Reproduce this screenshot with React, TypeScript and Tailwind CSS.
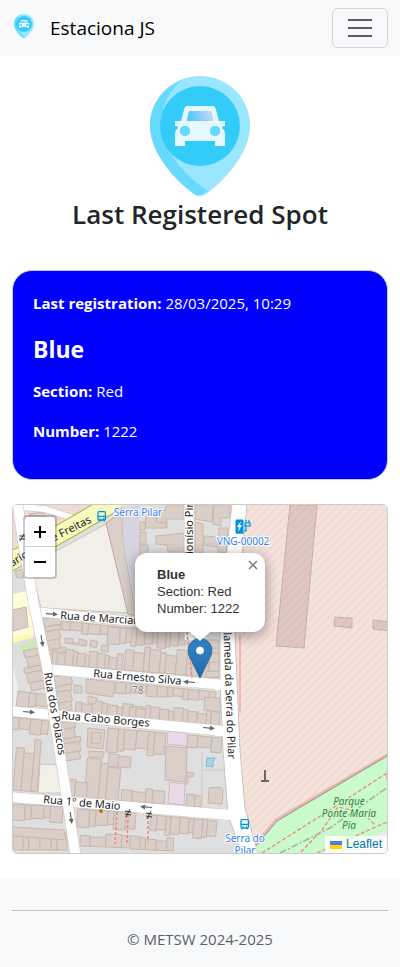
import { useState } from "react";

type Point = [number, number];

const pts = (list: Point[]) => list.map((p) => p.join(",")).join(" ");

// A terrace of houses along a line; depth runs perpendicular (negative = upwards).
function Terrace({ from, to, depth, count, seed = 1 }: { from: Point; to: Point; depth: number; count: number; seed?: number }) {
  const dx = to[0] - from[0];
  const dy = to[1] - from[1];
  const len = Math.hypot(dx, dy);
  const nx = -dy / len;
  const ny = dx / len;
  const cut = (i: number) => (i === 0 || i === count ? i / count : (i + (((i * 7 + seed * 3) % 5) - 2) * 0.12) / count);
  return (
    <>
      {Array.from({ length: count }, (_, i) => {
        const d = depth * (1 - ((i * 5 + seed * 2) % 4) * 0.09);
        const a: Point = [from[0] + dx * cut(i), from[1] + dy * cut(i)];
        const b: Point = [from[0] + dx * cut(i + 1), from[1] + dy * cut(i + 1)];
        return <polygon key={i} points={pts([a, b, [b[0] + nx * d, b[1] + ny * d], [a[0] + nx * d, a[1] + ny * d]])} />;
      })}
    </>
  );
}

function Street({ d, width }: { d: string; width: number }) {
  return (
    <g fill="none" strokeLinejoin="round">
      <path d={d} stroke="#c8c4c0" strokeWidth={width + 1} />
      <path d={d} stroke="#fff" strokeWidth={width} />
    </g>
  );
}

function Arrow({ x, y, angle }: { x: number; y: number; angle: number }) {
  return (
    <g transform={`translate(${x} ${y}) rotate(${angle})`} fill="#666">
      <path d="M-6 -.6H1V-2.5L6 0L1 2.5V.6H-6Z" />
    </g>
  );
}

function BusStop({ x, y }: { x: number; y: number }) {
  return (
    <g transform={`translate(${x} ${y})`} fill="none" stroke="#0092da" strokeWidth="1.3">
      <rect x="1" y=".7" width="7.4" height="8.3" rx="1" />
      <path d="M1 5.4H8.4M2.2 9V10.6M7.2 9V10.6M2.5 7.3H3.5M6 7.3H7" />
    </g>
  );
}

function PinLogo({ className, id }: { className: string; id: string }) {
  const pin = "M50 0C22 0 0 22 0 50C0 78 28 107 45 118.500Q50 121.500 55 118.500C72 107 100 78 100 50C100 22 78 0 50 0Z";
  return (
    <svg viewBox="0 0 100 120" className={className} aria-hidden="true">
      <defs>
        <linearGradient id={id} x1="0" y1="0.3" x2="1" y2="0.1">
          <stop offset="0.05" stopColor="#58c8f7" />
          <stop offset="1" stopColor="#d6d6f3" />
        </linearGradient>
      </defs>
      <path d={pin} fill="#9ae6fe" />
      <path d="M33 4C12 12 0 29 0 50C0 78 28 107 45 118.500Q50 121.500 58 114.500C40 104 22 84 15 66C8 42 13 18 33 4Z" fill="#67d9fd" />
      <circle cx="50" cy="50" r="40" fill="#33ccf9" />
      <path
        fill="#e6f8ff"
        fillRule="evenodd"
        d="M37 30H63Q65 30 65.500 32L69 45H75V50H73L72 52Q75 54 75 57V70H65V65H35V70H25V57Q25 54 28 52L27 50H25V45H31L34.500 32Q35 30 37 30ZM39 35L37 45H63L61 35ZM35 50A5 5 0 1 0 35 60A5 5 0 1 0 35 50ZM65 50A5 5 0 1 0 65 60A5 5 0 1 0 65 50Z"
      />
      <path d="M39 35H61L63 45H37Z" fill={`url(#${id})`} />
      <circle cx="35" cy="55" r="5" fill="#67d9fd" />
      <circle cx="65" cy="55" r="5" fill="#67d9fd" />
    </svg>
  );
}

function MapTiles() {
  return (
    <svg viewBox="13 505 374 348" preserveAspectRatio="xMidYMid slice" className="block h-full w-full font-['Noto_Sans',sans-serif]" aria-label="Street map">
      <defs>
        <pattern id="hatch" width="6" height="6" patternUnits="userSpaceOnUse" patternTransform="rotate(45)">
          <path d="M3 0V6" stroke="#f3c9c6" strokeWidth="1" opacity="0.75" />
        </pattern>
      </defs>
      <rect x="13" y="505" width="374" height="348" fill="#dfdfdf" />

      {/* land use */}
      <polygon points="13,505 90,505 60,525 13,550" fill="#f1dad4" />
      <polygon points="30,565 58,550 106,524 130,613 41,608" fill="#f2efe9" stroke="#cfc4bb" />
      <polygon points="106,523 122,512 123,540 136,616 128,614" fill="#d9cfc8" stroke="#c0ad9e" />
      <polygon points="122,512 138,505 143,560 150,616 136,616 123,540" fill="#d6d5df" />
      <polygon points="13,594 27,591 34,634 13,638" fill="#fffcd9" />
      <polygon points="13,638 33,633 34,637 13,643" fill="#fff9b0" />
      <polygon points="20,646 35,641 37,648 20,652" fill="#cdebb0" />
      <polygon points="13,665 22,706 13,706" fill="#f2efe9" />
      <polygon points="40,764 58,765 62,793 38,793" fill="#f2efe9" stroke="#cfc4bb" />

      <g fill="#d9cfc8" stroke="#c8b8ab" strokeWidth="1">
        {/* north */}
        <polygon points="13,610 26,607 28,627 13,631" />
        <polygon points="29,514 43,512 46,519 33,522" />
        <polygon points="15,571 25,569 27,577 17,578" />
        <polygon points="166,505 184,505 184,519 167,519 167,528 156,524 156,510 166,510" />
        <polygon points="146,516 156,515 156,522 166,523 166,528 145,528" />
        <polygon points="156,536 184,533 184,552 168,552 167,545 156,544" />
        <polygon points="140,522 145,522 145,530 140,530" />
        <polygon points="140,532 146,532 146,544 140,544" />
        <polygon points="140,545 148,545 148,556 140,556" />
        <polygon points="195,505 213,505 212,522 195,519" />
        <polygon points="214,505 230,505 229,518 221,518 221,526 213,524" />
        <polygon points="204,536 218,537 217,547 204,545" />
        <polygon points="195,522 203,524 203,553 195,553" />
        <polygon points="219,528 228,528 226,553 218,552" />

        {/* Marciano to Ernesto Silva */}
        <Terrace from={[43, 619]} to={[51, 663]} depth={-17} count={6} seed={2} />
        <Terrace from={[62, 621]} to={[130, 628]} depth={11} count={7} seed={3} />
        <Terrace from={[52, 664]} to={[122, 670]} depth={-16} count={11} seed={1} />
        <Terrace from={[108, 627]} to={[138, 629]} depth={17} count={3} seed={4} />
        <Terrace from={[124, 670]} to={[218, 678]} depth={-25} count={11} seed={5} />
        <Terrace from={[132, 628]} to={[186, 632]} depth={18} count={8} seed={6} />
        <polygon points="65,638 73,639 73,643 79,643 79,639 87,641 86,646 65,643" />
        <polygon points="102,645 109,646 108,652 101,651" />
        <polygon points="91,640 98,642 96,648 90,646" />
        <Terrace from={[219, 640]} to={[219, 677]} depth={13} count={5} seed={2} />

        {/* Ernesto Silva to Cabo Borges */}
        <Terrace from={[54, 677]} to={[60, 712]} depth={-17} count={4} seed={2} />
        <polygon points="74,685 82,686 82,693 74,693" />
        <polygon points="86,679 115,682 113,697 86,693" />
        <Terrace from={[116, 682]} to={[216, 692]} depth={11} count={12} seed={4} />
        <Terrace from={[75, 714]} to={[148, 721]} depth={-15} count={9} seed={1} />
        <Terrace from={[129, 719]} to={[219, 726]} depth={-15} count={12} seed={3} />
        <polygon points="88,696 97,698 95,704 88,703" />
        <polygon points="205,697 220,698 220,712 204,710" />

        {/* west of Rua dos Polacos */}
        <Terrace from={[38, 648]} to={[46, 688]} depth={18} count={5} seed={3} />
        <Terrace from={[18, 691]} to={[50, 695]} depth={15} count={3} seed={2} />
        <Terrace from={[13, 717]} to={[49, 721]} depth={15} count={4} seed={1} />
        <Terrace from={[13, 790]} to={[37, 792]} depth={-52} count={3} seed={5} />
        <Terrace from={[13, 804]} to={[63, 807]} depth={16} count={5} seed={4} />
        <Terrace from={[13, 850]} to={[67, 850]} depth={-19} count={6} seed={2} />
        <polygon points="13,827 64,830 66,840 13,836" />

        {/* Cabo Borges to 1º de Maio */}
        <Terrace from={[60, 723]} to={[66, 761]} depth={-18} count={5} seed={3} />
        <polygon points="88,728 105,730 103,749 87,747" />
        <polygon points="92,732 101,733 100,744 91,743" />
        <polygon points="89,751 104,752 103,758 89,757" />
        <Terrace from={[108, 728]} to={[166, 733]} depth={24} count={6} seed={2} />
        <Terrace from={[84, 798]} to={[118, 801]} depth={-40} count={3} seed={4} />
        <Terrace from={[67, 797]} to={[86, 799]} depth={-22} count={2} seed={1} />
        <Terrace from={[108, 766]} to={[130, 768]} depth={-15} count={2} seed={3} />
        <Terrace from={[121, 801]} to={[164, 804]} depth={-14} count={4} seed={5} />
        <polygon points="166,746 187,748 186,782 165,780" />
        <Terrace from={[188, 735]} to={[222, 738]} depth={15} count={3} seed={3} />
        <Terrace from={[186, 806]} to={[201, 807]} depth={-12} count={2} seed={2} />
        <polygon points="209,788 220,787 223,790 222,804 208,803" />
        <polygon points="187,772 194,773 193,777 188,777 188,784 185,784" />

        {/* south of 1º de Maio */}
        <Terrace from={[78, 809]} to={[136, 813]} depth={18} count={6} seed={4} />
        <Terrace from={[151, 815]} to={[217, 821]} depth={19} count={9} seed={3} />
        <Terrace from={[80, 846]} to={[131, 848]} depth={-13} count={4} seed={1} />
        <Terrace from={[130, 849]} to={[173, 851]} depth={-13} count={5} seed={2} />
      </g>
      <polygon points="168,731 187,733 187,746 167,744" fill="#ead9e6" stroke="#d1b9c9" />
      <polygon points="170,782 185,784 184,805 168,803" fill="#ead9e6" stroke="#d1b9c9" />
      <polygon points="207,758 215,758 213,763 213,767 206,766" fill="#aad3df" stroke="#77bfd2" />
      <path d="M202 752L202 804M202 770H225" stroke="#ccc" fill="none" />

      {/* military ground and park */}
      <polygon points="246,505 387,505 387,757 277,821 254,846 244,808 240,750 235,633" fill="#f2e3db" />
      <g fill="#dac5be" stroke="#c6aaa2">
        <polygon points="290,505 317,505 304,648 276,646" />
        <polygon points="335,617 352,618 352,628 334,626" />
        <polygon points="373,620 390,622 390,631 373,629" />
      </g>
      <polygon points="246,505 387,505 387,757 277,821 254,846 244,808 240,750 235,633" fill="url(#hatch)" />
      <path d="M240 635V712" stroke="#f5aaa6" strokeWidth="1.500" />
      <polygon points="387,756 277,821 254,847 258,853 387,853" fill="#c8facc" />
      <path d="M387 755L276 820L254 846" fill="none" stroke="#e9b8b2" strokeWidth="3" />
      <path d="M387 756L277 821L255 847" fill="none" stroke="#8e9a84" strokeWidth="1" />
      <path d="M350 858L387 836" stroke="#eee" strokeWidth="12" />
      <g fill="none" stroke="#f5857a" strokeWidth="1.300" strokeDasharray="4 2">
        <path d="M262 853L322 815L387 773V781" />
        <path d="M301 852L322 830L338 807L363 813L375 825" />
        <path d="M317 853L387 822" />
      </g>
      <path d="M280 853L330 828L388 787" fill="none" stroke="#aaa" strokeWidth="1.500" strokeDasharray="7 2 2 2" />

      {/* streets */}
      <Street d="M20 507L45 509L76 519" width={6} />
      <Street d="M189 505V640" width={9} />
      <Street d="M40 612L138 622L190 628" width={9} />
      <Street d="M46 669L225 685" width={10} />
      <Street d="M10 711L225 731" width={10} />
      <Street d="M10 797L230 815" width={10} />
      <path d="M8 563Q50 540 118 500" fill="none" stroke="#a7b541" strokeWidth="19" />
      <path d="M8 563Q50 540 118 500" fill="none" stroke="#f7fabf" strokeWidth="17" />
      <Street d="M17 500L24 548L33 600L47 667L56 728L76 858" width={10} />
      <polygon
        points="232,504 226,560 220,633 220,680 223,750 228,815 242,854 258,854 245,808 240,750 235,633 238,600 247,504"
        fill="#fff"
        stroke="#c8c4c0"
      />
      <path d="M215 685H224M215 731H227M220 814L231 815" stroke="#fff" strokeWidth="10" />
      <g stroke="#f5857a" strokeWidth="1.500" strokeDasharray="3 2" fill="none">
        <path d="M187 632L192 678M117 812L115 844M128 815L127 845M148 816V842" />
      </g>

      <Arrow x={52} y={614} angle={4} />
      <Arrow x={42} y={641} angle={80} />
      <Arrow x={29} y={712} angle={5} />
      <Arrow x={189} y={682} angle={185} />
      <Arrow x={209} y={728} angle={5} />
      <Arrow x={146} y={807} angle={185} />
      <Arrow x={71} y={818} angle={82} />
      <path d="M125 811L131 812M125 814L131 815M130 809L126 817M146 813L152 814M146 816L152 817M151 811L147 819M19 536H25M19 539H25M24 534L20 541" stroke="#333" />
      <circle cx="101" cy="811" r="2" fill="#c77400" />
      <path d="M264 770H266V780H269V782H261V780H264Z" fill="#666" />
      <BusStop x={97} y={511} />
      <BusStop x={240} y={819} />
      <path d="M236 520H243V533H236ZM236 533H244" fill="#0092da" stroke="#0092da" />
      <path d="M244 531H246V525M245 523H250V526H245ZM246 520V523M249 520V523" fill="none" stroke="#0092da" strokeWidth="1.200" />
      <path d="M241 521L237 527H239L238 532L242 525H240Z" fill="#fff" />

      {/* labels */}
      <g fontSize="11" fill="#222" stroke="#fff" strokeWidth="2" strokeLinejoin="round" paintOrder="stroke">
        <text transform="translate(60 619) rotate(4)">Rua de Marciano</text>
        <text transform="translate(93 677) rotate(5)">Rua Ernesto Silva</text>
        <text transform="translate(61 719) rotate(5)">Rua Cabo Borges</text>
        <text transform="translate(43 803) rotate(5)">Rua 1º de Maio</text>
        <text transform="translate(44 673) rotate(80)">Rua dos Polacos</text>
        <text transform="translate(228 759) rotate(88)" textAnchor="end">Alameda da Serra do Pilar</text>
        <text transform="translate(193 562) rotate(-90)">Dionísio Pires</text>
      </g>
      <g fontSize="11" fill="#222">
        <text transform="translate(12 567) rotate(-32)">ário</text>
        <text transform="translate(92 522) rotate(-27)" textAnchor="end">de Freitas</text>
      </g>
      <text x="132" y="694" fontSize="10" fill="#777" stroke="#fff" strokeWidth="1" paintOrder="stroke">78</text>
      <g fontSize="10" fill="#337ff0" stroke="#fff" strokeWidth="2" paintOrder="stroke" textAnchor="middle">
        <text x="138" y="516">Serra Pilar</text>
        <text x="243" y="545">VNG-00002</text>
        <text x="245" y="842">Serra do</text>
        <text x="245" y="854">Pilar</text>
      </g>
      <g fontSize="10" fontStyle="italic" fill="#36803c" stroke="#c8facc" strokeWidth="2" paintOrder="stroke" textAnchor="middle">
        <text x="349" y="805">Parque</text>
        <text x="349" y="817">Ponte Maria</text>
        <text x="349" y="829">Pia</text>
      </g>
    </svg>
  );
}

function Marker() {
  return (
    <svg viewBox="0 0 25 41" className="h-[41px] w-[25px]" aria-hidden="true">
      <defs>
        <linearGradient id="marker" x1="0" y1="0" x2="0" y2="1">
          <stop offset="0" stopColor="#3188cb" />
          <stop offset="1" stopColor="#2268a6" />
        </linearGradient>
      </defs>
      <path d="M12.500 .5C6 .5 .5 6 .5 12.500C.5 15 1.500 18 3 20.500L12.500 40L22 20.500C23.500 18 24.500 15 24.500 12.500C24.500 6 19 .5 12.500 .5Z" fill="url(#marker)" stroke="#2e6c97" />
      <circle cx="12.500" cy="12.500" r="4.300" fill="#fff" stroke="#2e6c97" strokeWidth=".7" />
    </svg>
  );
}

export default function App() {
  const [popupOpen, setPopupOpen] = useState(true);

  return (
    <div className="flex min-h-screen flex-col bg-white font-['Segoe_UI','Open_Sans',sans-serif] text-[15px] leading-6 text-[#212529]">
      <nav className="flex h-14 items-center justify-between bg-[#f8f9fa] px-3">
        <a href="#" className="flex items-center gap-3.5 text-[19px] text-black">
          <PinLogo id="glass-small" className="mb-1 h-6 w-6" />
          <span>Estaciona JS</span>
        </a>
        <button type="button" aria-label="Toggle navigation" className="flex h-10 w-14 flex-col items-center justify-center gap-1.5 rounded-md border border-[#d3d4d5]">
          <span className="h-0.5 w-6 bg-[#5c5d62]" />
          <span className="h-0.5 w-6 bg-[#5c5d62]" />
          <span className="h-0.5 w-6 bg-[#5c5d62]" />
        </button>
      </nav>

      <main className="flex flex-col px-3 pt-5 pb-6">
        <header className="flex flex-col items-center">
          <PinLogo id="glass-large" className="h-[120px] w-[100px]" />
          <h1 className="text-[26px] leading-9 font-semibold">Last Registered Spot</h1>
        </header>

        <section className="mt-[38px] rounded-[20px] border border-[#c8c8d8] bg-[#0000ff] px-5 pt-5 pb-9 text-white">
          <p>
            <strong className="font-bold">Last registration:</strong> 28/03/2025, 10:29
          </p>
          <h2 className="mt-5 text-[23px] leading-7 font-bold">Blue</h2>
          <p className="mt-4">
            <strong className="font-bold">Section:</strong> Red
          </p>
          <p className="mt-4">
            <strong className="font-bold">Number:</strong> 1222
          </p>
        </section>

        <section aria-label="Spot location" className="relative mt-6 h-[350px] overflow-hidden rounded-[5px] border border-[#ccc] font-['Liberation_Sans',Arial,sans-serif]">
          <MapTiles />

          <div className="absolute bottom-[174px] left-1/2 -translate-x-1/2">
            <Marker />
          </div>

          {popupOpen && (
            <div className="absolute top-12 left-1/2 h-[79px] w-[130px] -translate-x-1/2 rounded-xl bg-white py-[13px] pr-6 pl-[22px] text-[13px] leading-[17px] text-[#333] shadow-[0_3px_14px_rgba(0,0,0,0.4)]">
              <p className="font-bold">Blue</p>
              <p>Section: Red</p>
              <p>Number: 1222</p>
              <button type="button" aria-label="Close popup" onClick={() => setPopupOpen(false)} className="absolute top-0 right-0 flex h-6 w-6 items-center justify-center text-[#757575]">
                <svg viewBox="0 0 10 10" className="h-2.5 w-2.5" aria-hidden="true">
                  <path d="M1 1L9 9M9 1L1 9" stroke="currentColor" strokeWidth="1.400" />
                </svg>
              </button>
              <svg viewBox="0 0 20 10" className="absolute top-full left-1/2 h-2.5 w-5 -translate-x-1/2" aria-hidden="true">
                <path d="M0 0H20L10 9Z" fill="#fff" />
              </svg>
            </div>
          )}

          <div className="absolute top-2.5 left-2.5 flex flex-col rounded border-2 border-black/20 bg-clip-padding text-black">
            <button type="button" aria-label="Zoom in" className="flex h-[30px] w-[30px] items-center justify-center rounded-t-sm border-b border-[#ccc] bg-white">
              <svg viewBox="0 0 12 12" className="h-3 w-3" aria-hidden="true">
                <path d="M0 6H12M6 0V12" stroke="currentColor" strokeWidth="2" />
              </svg>
            </button>
            <button type="button" aria-label="Zoom out" className="flex h-[30px] w-[30px] items-center justify-center rounded-b-sm bg-white">
              <svg viewBox="0 0 12 12" className="h-3 w-3" aria-hidden="true">
                <path d="M0 6H12" stroke="currentColor" strokeWidth="2" />
              </svg>
            </button>
          </div>

          <a href="#leaflet" className="absolute right-0 bottom-0 flex items-center gap-1 bg-white/80 px-[5px] text-[12px] leading-[17px] text-[#0078a8]">
            <svg viewBox="0 0 12 8" className="h-2 w-3" aria-hidden="true">
              <path fill="#4c7be1" d="M0 0h12v4H0z" />
              <path fill="#ffd500" d="M0 4h12v4H0z" />
            </svg>
            Leaflet
          </a>
        </section>
      </main>

      <footer className="grow bg-[#f8f9fa] px-3 pt-8 text-center text-[#5c6166]">
        <hr className="border-[#bfc1c3]" />
        <p className="pt-4 pb-4">© METSW 2024-2025</p>
      </footer>
    </div>
  );
}
